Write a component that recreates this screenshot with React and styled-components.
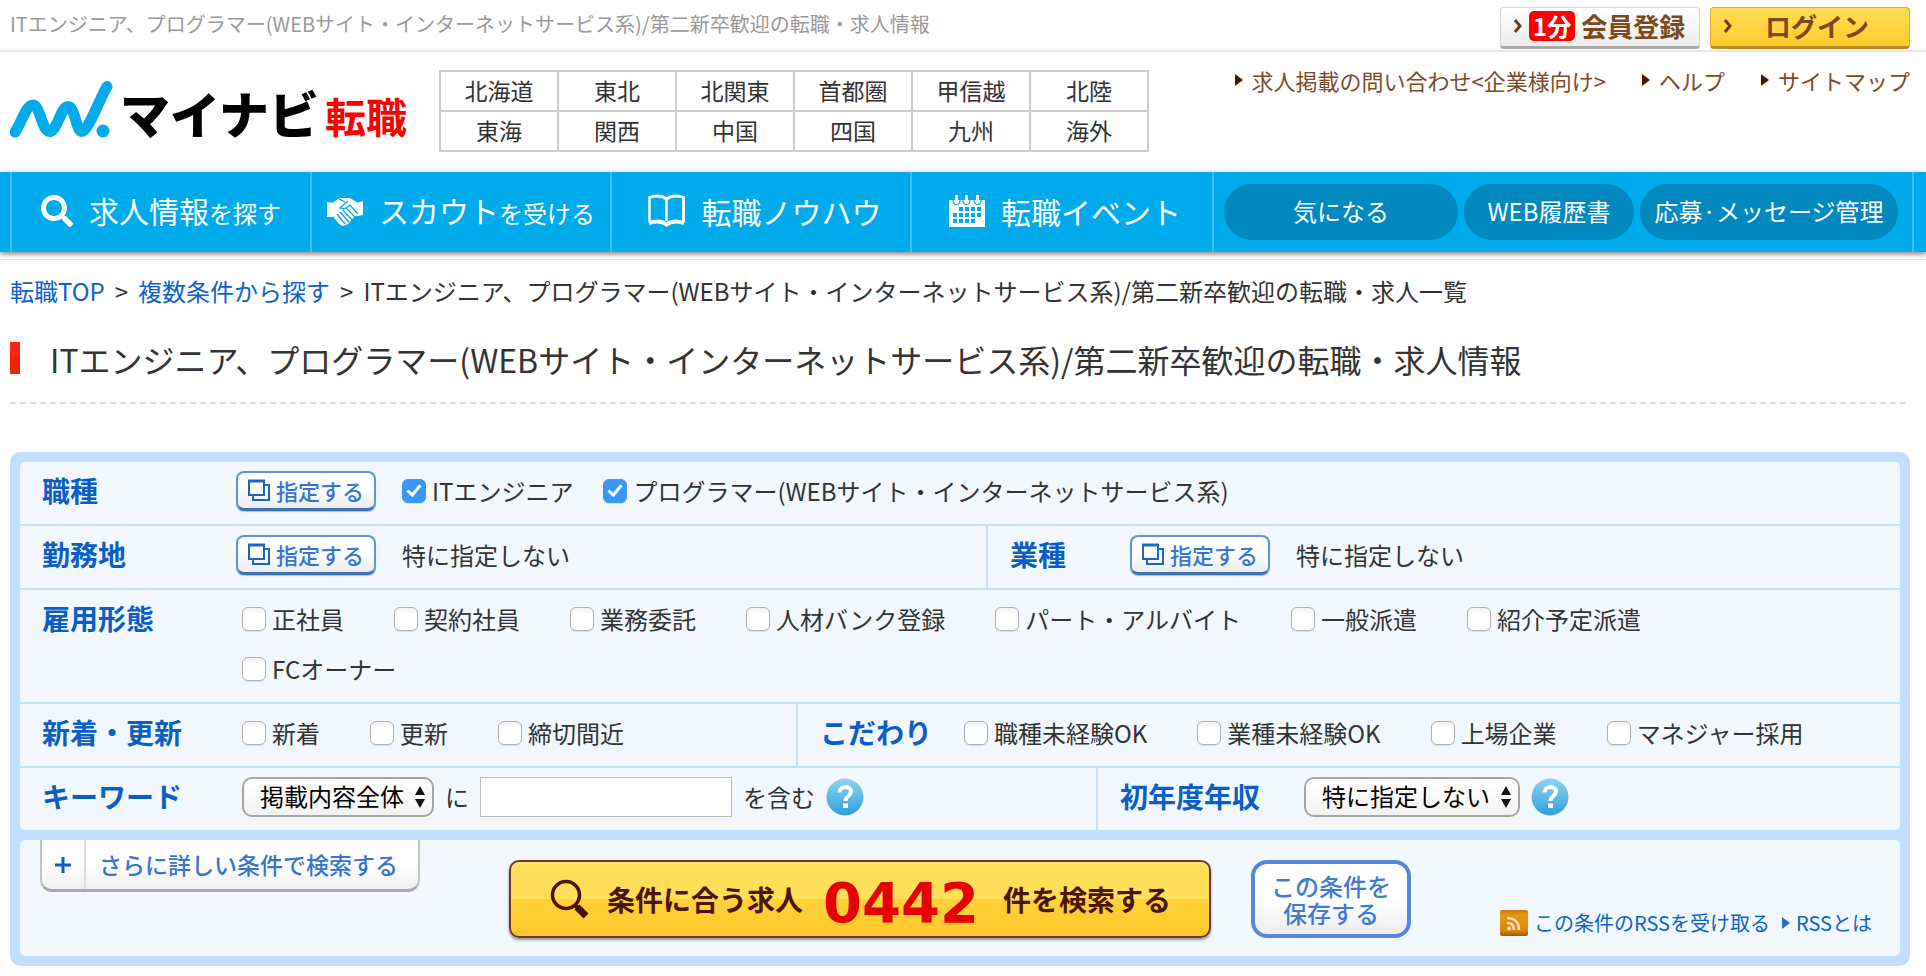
import React from "react";
import styled, { createGlobalStyle, css } from "styled-components";
import { FaSearch } from "react-icons/fa";

const GlobalStyle = createGlobalStyle`
  *, *::before, *::after { box-sizing: border-box; }
  body {
    margin: 0;
    background: #fff;
    color: #333;
    font-family: "Noto Sans CJK JP", "Noto Sans", sans-serif;
    font-size: 24px;
    line-height: 36px;
  }
  a { color: inherit; text-decoration: none; }
  button, input, select { font: inherit; margin: 0; }
  h1, p, ul, ol { margin: 0; padding: 0; font-weight: 400; }
  ul, ol { list-style: none; }
  svg { display: block; flex: none; }
`;

/* ---------- top strip ---------- */

const TopBar = styled.div`
  display: flex;
  align-items: center;
  justify-content: space-between;
  height: 52px;
  padding: 0 16px 0 10px;
  border-bottom: 2px solid #e8e8e8;
`;

const TopText = styled.p`
  padding-bottom: 2px;
  color: #999;
  font-size: 20px;
  line-height: 46px;
`;

const TopButtons = styled.div`
  display: flex;
  gap: 10px;
  padding-top: 6px;
`;

const TopButton = styled.button`
  display: flex;
  align-items: center;
  gap: ${(p) => (p.$login ? 32 : 6)}px;
  width: 200px;
  height: 42px;
  padding: 0 12px 2px;
  border: 1px solid ${(p) => (p.$login ? "#d9ae2a" : "#d5d5d5")};
  border-bottom: 3px solid ${(p) => (p.$login ? "#bb8f22" : "#aaa")};
  border-radius: 4px;
  background: ${(p) =>
    p.$login
      ? "linear-gradient(#ffdd55, #ffcb2b)"
      : "linear-gradient(#fff, #ececec)"};
  color: #7a4a1e;
  font-size: 26px;
  line-height: 36px;
  font-weight: 700;
  white-space: nowrap;
`;

const Badge = styled.span`
  padding: 0 4px;
  border-radius: 5px;
  background: #f00;
  color: #fff;
  font-size: 24px;
  line-height: 30px;
`;

const Chevron = () => (
  <svg width="10" height="16" viewBox="0 0 10 16" fill="none" stroke="#6b3d1e" strokeWidth="3">
    <path d="M2 2l5 6-5 6" />
  </svg>
);

/* ---------- header ---------- */

const Header = styled.header`
  display: flex;
  align-items: flex-start;
  gap: 32px;
  padding: 18px 16px 20px 10px;
`;

const LogoLink = styled.a`
  display: flex;
  align-items: flex-end;
  gap: 6px;
  height: 82px;
  padding: 11px 0 14px;
  white-space: nowrap;
`;

const LogoName = styled.span`
  color: #000;
  font-size: 50px;
  line-height: 52px;
  font-weight: 900;
`;

const LogoSub = styled.span`
  color: #f00;
  font-size: 41px;
  line-height: 46px;
  font-weight: 700;
`;

const Regions = styled.ul`
  display: grid;
  grid-template-columns: repeat(6, 116px);
  gap: 2px;
  padding: 2px;
  background: #ccc;
`;

const Region = styled.li`
  padding-bottom: 2px;
  background: #fff;
  font-size: 23px;
  line-height: 36px;
  text-align: center;
`;

const RegionLink = styled.a`
  display: block;
`;

const HelpLinks = styled.ul`
  display: flex;
  gap: 36px;
  margin-left: auto;
`;

const HelpLink = styled.a`
  display: flex;
  align-items: center;
  gap: 9px;
  color: #7a4a2a;
  font-size: 22px;
  line-height: 20px;
  white-space: nowrap;
`;

const Triangle = styled.span`
  border-style: solid;
  border-width: 6px 0 6px 8px;
  border-color: transparent transparent transparent ${(p) => p.$color};
`;

/* ---------- navigation ---------- */

const Nav = styled.nav`
  display: grid;
  grid-template-columns: 300fr 300fr 300fr 302fr 702fr;
  height: 80px;
  padding: 0 12px 0 10px;
  background: #00abeb;
  box-shadow: 0 2px 5px rgba(0, 0, 0, 0.5);
`;

const NavItem = styled.a`
  display: flex;
  align-items: center;
  justify-content: center;
  gap: 16px;
  padding: 0 0 2px ${(p) => (p.$plain ? 6 : 0)}px;
  border-left: 2px solid #40c0f1;
  color: #fff;
  font-size: 30px;
  white-space: nowrap;
`;

const NavSmall = styled.span`
  font-size: 24px;
`;

const Pills = styled.div`
  display: flex;
  align-items: center;
  gap: 6px;
  padding: 0 14px 0 10px;
  border: solid #40c0f1;
  border-width: 0 2px;
`;

const Pill = styled.a`
  flex: ${(p) => p.$grow} 1 0;
  padding-bottom: 2px;
  border-radius: 28px;
  background: #0088bf;
  color: #fff;
  line-height: 54px;
  text-align: center;
  white-space: nowrap;
`;

/* ---------- title area ---------- */

const Main = styled.main`
  margin-top: 7px;
  padding: 0 16px 10px 10px;
  border-top: 1px solid #cfe6f5;
`;

const Breadcrumb = styled.ol`
  display: flex;
  gap: 10px;
  padding-top: 13px;
  white-space: nowrap;
`;

const Link = styled.a`
  color: #0b62cc;
`;

const Title = styled.h1`
  display: flex;
  align-items: flex-start;
  gap: 30px;
  height: 95px;
  margin-bottom: 48px;
  padding-top: 33px;
  background: repeating-linear-gradient(90deg, #ddd 0 6px, transparent 6px 10px)
    bottom / 100% 2px no-repeat;
  font-size: 32px;
  line-height: 34px;
  white-space: nowrap;

  &::before {
    content: "";
    width: 10px;
    height: 32px;
    background: linear-gradient(#ff2018 35%, #ee2200 50%);
  }
`;

/* ---------- search form ---------- */

const Panel = styled.form`
  display: flex;
  flex-direction: column;
  gap: 10px;
  padding: 10px;
  border-radius: 10px;
  background: #c2dfff;
`;

const Card = styled.div`
  border-radius: 5px;
  background: #f3f8ff;
`;

const Row = styled.div`
  display: grid;
  grid-template-columns: ${(p) => p.$cols || "1fr"};
  min-height: 62px;

  & + & {
    min-height: 64px;
    border-top: 2px solid #c2dfff;
  }
`;

const Cell = styled.div`
  display: flex;
  align-items: flex-start;
  padding: 8px 22px 12px;
  padding-right: ${(p) => (p.$inset ? 100 : 22)}px;

  & + & {
    border-left: 2px solid #c2dfff;
  }
`;

const CellLabel = styled.div`
  flex: none;
  width: ${(p) => p.$width}px;
  color: #0b5dc7;
  font-size: 28px;
  line-height: 40px;
  font-weight: 700;
`;

const Controls = styled.div`
  display: flex;
  align-items: center;
  gap: ${(p) => p.$gap}px;
  height: 42px;
`;

const Checks = styled.div`
  display: flex;
  flex-wrap: wrap;
  gap: 14px ${(p) => p.$gap || 50}px;
  margin: 3px 0;
`;

const CheckLabel = styled.label`
  display: flex;
  align-items: center;
  gap: 6px;
  white-space: nowrap;
`;

const Checkbox = styled.input.attrs({ type: "checkbox" })`
  appearance: none;
  display: grid;
  place-items: center;
  width: 24px;
  height: 24px;
  border: 1px solid #b0b0b0;
  border-radius: 6px;
  background: linear-gradient(#f2f2f2, #fff 30%);
  box-shadow: 0 1px 1px rgba(0, 0, 0, 0.1);

  &:checked {
    border-color: #3797fc;
    background: #3797fc;
  }

  &:checked::after {
    content: "";
    width: 8px;
    height: 14px;
    margin-bottom: 4px;
    border: solid #fff;
    border-width: 0 3px 3px 0;
    transform: rotate(40deg);
  }
`;

const PickButton = styled.button`
  display: flex;
  align-items: center;
  gap: 6px;
  width: 140px;
  height: 40px;
  padding: 0 10px 2px;
  border: 2px solid #5f93dc;
  border-bottom: 3px solid #3d73b3;
  border-radius: 8px;
  background: linear-gradient(#fff 40%, #ececee);
  box-shadow: 0 1px 1px rgba(0, 0, 0, 0.25);
  color: #3377d0;
  font-size: 22px;
  line-height: 32px;
  font-weight: 500;
  white-space: nowrap;
`;

const Plain = styled.span`
  white-space: nowrap;
`;

const SelectBox = styled.span`
  display: grid;
  align-items: center;

  & > * {
    grid-area: 1 / 1;
  }

  & > svg {
    justify-self: end;
    margin-right: 8px;
    pointer-events: none;
  }
`;

const Select = styled.select`
  appearance: none;
  width: ${(p) => p.$width}px;
  height: 40px;
  padding: 0 16px 2px;
  border: 2px solid #a5a5a5;
  border-radius: 10px;
  background: linear-gradient(#fff, #f3f3f3);
  color: #000;
  line-height: 34px;
`;

const TextInput = styled.input.attrs({ type: "text" })`
  width: 252px;
  height: 40px;
  padding: 0 8px;
  border: 1px solid #bbb;
  border-radius: 0;
  background: #fff;
`;

const IconButton = styled.button`
  padding: 0;
  border: 0;
  background: none;
`;

/* ---------- actions ---------- */

const Actions = styled(Card)`
  display: flex;
  align-items: flex-start;
  justify-content: space-between;
  height: 116px;
  padding: 0 28px 0 20px;
`;

const raised = css`
  border: 2px solid #c4c4c4;
  border-top: 0;
  border-bottom: 3px solid #aaa;
  border-radius: 0 0 12px 12px;
`;

const MoreButton = styled.button`
  display: flex;
  align-items: center;
  width: 380px;
  height: 52px;
  padding: 0;
  ${raised}
  background: linear-gradient(#fff 50%, #f0f0f0);
  color: #3874cd;
  font-size: 23px;
  font-weight: 500;
  line-height: 49px;
  white-space: nowrap;
`;

const PlusCell = styled.span`
  display: grid;
  place-items: center;
  width: 44px;
  height: 49px;
  margin-right: 13px;
  border-right: 2px solid #ddd;
`;

const MainActions = styled.div`
  display: flex;
  gap: 40px;
  padding-top: 20px;
`;

const SearchButton = styled.button`
  display: flex;
  align-items: center;
  width: 702px;
  height: 78px;
  padding: 0 38px;
  border: 2px solid #6b3a2a;
  border-radius: 10px;
  background: linear-gradient(#ffdf58 50%, #ffd23a 50%, #ffc82a);
  box-shadow: 0 2px 3px rgba(0, 0, 0, 0.4), inset 0 2px 2px #ffe98a;
  color: #4a1505;
  font-size: 28px;
  font-weight: 700;
  white-space: nowrap;
`;

const SearchText = styled.span`
  margin-left: 18px;
`;

const Count = styled.span`
  margin: 8px 6px 0 20px;
  color: #e60000;
  font-family: "DejaVu Sans", sans-serif;
  font-size: 56px;
  line-height: 64px;
`;

const SaveButton = styled.button`
  width: 160px;
  height: 78px;
  padding: 0;
  border: 4px solid #5588dc;
  border-radius: 16px;
  background: linear-gradient(#fff 50%, #ececec);
  color: #3f7bd3;
  font-size: 24px;
  font-weight: 500;
  line-height: 27px;
`;

const RssLinks = styled.div`
  display: flex;
  align-items: center;
  gap: 12px;
  padding-top: 68px;
  font-size: 20px;
  line-height: 30px;
`;

const RssLink = styled(Link)`
  display: flex;
  align-items: center;
  gap: 6px;
  white-space: nowrap;
`;

/* ---------- icons ---------- */

const LogoMark = () => (
  <svg width="104" height="58" viewBox="0 0 104 58">
    <path
      d="M5 52C12 42 16 25 23 25S32 51.500 39.500 51.500S51 26.500 58 26.500S66 51.500 72 51.500C78 51.500 89 20 97 6.500"
      fill="none"
      stroke="#00abeb"
      strokeWidth="11"
      strokeLinecap="round"
    />
    <circle cx="93" cy="51" r="6.500" fill="#00abeb" />
  </svg>
);

const HandshakeIcon = () => (
  <svg width="36" height="30" viewBox="0 0 36 30">
    <path d="M0 6l6 1v14H0zM36 5l-6 2v13l6-1z" fill="#fff" />
    <path d="M5 7l8-5h10l8 5v12l-4 2-6 7-5 2-4-2-7-9z" fill="#fff" />
    <path
      d="M12 3l6 3M21 5l-8 7 4 1 6-4 8 9M16 14l9 10M13 16l9 10M10 18l8 10M19 12l9 9"
      fill="none"
      stroke="#00abeb"
      strokeWidth="1.300"
    />
  </svg>
);

const BookIcon = () => (
  <svg width="39" height="34" viewBox="0 0 39 34" fill="none" stroke="#fff">
    <path d="M2.500 3.500C8 1 15 1.500 19.500 5 24 1.500 31 1 36.500 3.500V28" strokeWidth="3" />
    <path d="M2.500 2.500V28M19.500 5v22" strokeWidth="2.500" />
    <path d="M2 29c6-2 13-2 17.500 1.500C24 27 31 27 37 29" strokeWidth="4" />
  </svg>
);

const CalendarIcon = () => (
  <svg width="36" height="32" viewBox="0 0 36 32">
    <path d="M0 5h36v27H0z" fill="#fff" />
    <path d="M6 0h3v6H6zM16 0h3v6h-3zM27 0h3v6h-3z" fill="#fff" />
    <path d="M4 5c0 6 7 6 7 0M14 5c0 6 7 6 7 0M25 5c0 6 7 6 7 0" fill="none" stroke="#00abeb" strokeWidth="1.200" />
    <path
      d="M10 12h4v4h-4zM16 12h4v4h-4zM22 12h4v4h-4zM28 12h4v4h-4zM4 18h4v4H4zM10 18h4v4h-4zM16 18h4v4h-4zM22 18h4v4h-4zM28 18h4v4h-4zM4 24h4v4H4zM10 24h4v4h-4zM16 24h4v4h-4zM22 24h4v4h-4z"
      fill="#00abeb"
    />
  </svg>
);

const WindowsIcon = () => (
  <svg width="22" height="22" viewBox="0 0 22 22" fill="none" stroke="#1f66c4" strokeWidth="2">
    <path d="M1 2h15v14H1z" />
    <path d="M0 2h17" strokeWidth="3" />
    <path d="M5 17v4h16V6h-4" />
  </svg>
);

const UpDownIcon = () => (
  <svg width="12" height="24" viewBox="0 0 12 24">
    <path d="M6 1l5 9H1zM6 23l5-9H1z" fill="#111" />
  </svg>
);

const HelpIcon = () => (
  <svg width="38" height="38" viewBox="0 0 38 38">
    <defs>
      <linearGradient id="help" x1="0" y1="0" x2="0" y2="1">
        <stop offset="0" stopColor="#8fd3ef" />
        <stop offset="1" stopColor="#2f9fdc" />
      </linearGradient>
    </defs>
    <circle cx="19" cy="19" r="18.500" fill="url(#help)" />
    <path d="M13.500 14.500c0-7 11.500-7 11.500-1 0 4.500-5.500 4.500-5.500 9.500" fill="none" stroke="#fff" strokeWidth="4" />
    <path d="M17 25.500h5v4.500h-5z" fill="#fff" />
  </svg>
);

const PlusIcon = () => (
  <svg width="16" height="16" viewBox="0 0 16 16" stroke="#0b5dc7" strokeWidth="3">
    <path d="M0 8h16M8 0v16" />
  </svg>
);

const GlassIcon = () => (
  <svg width="40" height="40" viewBox="0 0 40 40" fill="none" stroke="#4a1505">
    <circle cx="17" cy="16" r="13.500" strokeWidth="3.500" />
    <path d="M26 26l4 4" strokeWidth="4" />
    <path d="M28 28l9 9" strokeWidth="7" />
  </svg>
);

const RssIcon = () => (
  <svg width="28" height="26" viewBox="0 0 28 26">
    <defs>
      <linearGradient id="rss" x1="0" y1="0" x2="0" y2="1">
        <stop offset="0" stopColor="#c97a12" />
        <stop offset="0.2" stopColor="#e8960f" />
        <stop offset="0.8" stopColor="#dd850c" />
        <stop offset="1" stopColor="#a85400" />
      </linearGradient>
    </defs>
    <rect width="28" height="26" rx="2" fill="url(#rss)" />
    <g fill="none" stroke="#fbe3bd" strokeWidth="2.500">
      <path d="M7 13c5 0 7 3 7 7M7 8c8 0 12 5 12 12" />
    </g>
    <circle cx="9" cy="18.500" r="2" fill="#fbe3bd" />
  </svg>
);

/* ---------- data ---------- */

const REGIONS = [
  "北海道", "東北", "北関東", "首都圏", "甲信越", "北陸",
  "東海", "関西", "中国", "四国", "九州", "海外",
];

const NAV_ITEMS = [
  { icon: <FaSearch size={32} />, text: "求人情報", small: "を探す" },
  { icon: <HandshakeIcon />, text: "スカウト", small: "を受ける" },
  { icon: <BookIcon />, text: "転職ノウハウ" },
  { icon: <CalendarIcon />, text: "転職イベント" },
];

const PILLS = [
  { text: "気になる", grow: 234 },
  { text: "WEB履歴書", grow: 170 },
  { text: "応募·メッセージ管理", grow: 258 },
];

const CheckList = ({ items, gap, checked }) => (
  <Checks $gap={gap}>
    {items.map((item) => (
      <CheckLabel key={item}>
        <Checkbox defaultChecked={checked} />
        {item}
      </CheckLabel>
    ))}
  </Checks>
);

const Pick = () => (
  <PickButton type="button">
    <WindowsIcon />
    指定する
  </PickButton>
);

const Dropdown = ({ id, label, width, ariaLabel }) => (
  <SelectBox>
    <Select id={id} $width={width} aria-label={ariaLabel}>
      <option>{label}</option>
    </Select>
    <UpDownIcon />
  </SelectBox>
);

const Help = () => (
  <IconButton type="button" aria-label="ヘルプ">
    <HelpIcon />
  </IconButton>
);

export default function App() {
  return (
    <>
      <GlobalStyle />
      <TopBar>
        <TopText>
          ITエンジニア、プログラマー(WEBサイト・インターネットサービス系)/第二新卒歓迎の転職・求人情報
        </TopText>
        <TopButtons>
          <TopButton type="button">
            <Chevron />
            <Badge>1分</Badge>
            会員登録
          </TopButton>
          <TopButton type="button" $login>
            <Chevron />
            ログイン
          </TopButton>
        </TopButtons>
      </TopBar>

      <Header>
        <LogoLink href="#">
          <LogoMark />
          <LogoName>マイナビ</LogoName>
          <LogoSub>転職</LogoSub>
        </LogoLink>
        <Regions>
          {REGIONS.map((name) => (
            <Region key={name}>
              <RegionLink href="#">{name}</RegionLink>
            </Region>
          ))}
        </Regions>
        <HelpLinks>
          {["求人掲載の問い合わせ<企業様向け>", "ヘルプ", "サイトマップ"].map((text) => (
            <li key={text}>
              <HelpLink href="#">
                <Triangle $color="#4a1505" />
                {text}
              </HelpLink>
            </li>
          ))}
        </HelpLinks>
      </Header>

      <Nav>
        {NAV_ITEMS.map((item) => (
          <NavItem key={item.text} href="#" $plain={!item.small}>
            {item.icon}
            <span>
              {item.text}
              {item.small && <NavSmall>{item.small}</NavSmall>}
            </span>
          </NavItem>
        ))}
        <Pills>
          {PILLS.map((pill) => (
            <Pill key={pill.text} href="#" $grow={pill.grow}>
              {pill.text}
            </Pill>
          ))}
        </Pills>
      </Nav>

      <Main>
        <Breadcrumb>
          <li><Link href="#">転職TOP</Link></li>
          <li>&gt;</li>
          <li><Link href="#">複数条件から探す</Link></li>
          <li>&gt;</li>
          <li>
            ITエンジニア、プログラマー(WEBサイト・インターネットサービス系)/第二新卒歓迎の転職・求人一覧
          </li>
        </Breadcrumb>
        <Title>
          ITエンジニア、プログラマー(WEBサイト・インターネットサービス系)/第二新卒歓迎の転職・求人情報
        </Title>

        <Panel onSubmit={(e) => e.preventDefault()}>
          <Card>
            <Row>
              <Cell>
                <CellLabel $width={194}>職種</CellLabel>
                <Controls $gap={26}>
                  <Pick />
                  <CheckList
                    gap={30}
                    checked
                    items={[
                      "ITエンジニア",
                      "プログラマー(WEBサイト・インターネットサービス系)",
                    ]}
                  />
                </Controls>
              </Cell>
            </Row>
            <Row $cols="966fr 914fr">
              <Cell>
                <CellLabel $width={194}>勤務地</CellLabel>
                <Controls $gap={26}>
                  <Pick />
                  <Plain>特に指定しない</Plain>
                </Controls>
              </Cell>
              <Cell>
                <CellLabel $width={120}>業種</CellLabel>
                <Controls $gap={26}>
                  <Pick />
                  <Plain>特に指定しない</Plain>
                </Controls>
              </Cell>
            </Row>
            <Row>
              <Cell $inset>
                <CellLabel $width={200}>雇用形態</CellLabel>
                <CheckList
                  items={[
                    "正社員", "契約社員", "業務委託", "人材バンク登録",
                    "パート・アルバイト", "一般派遣", "紹介予定派遣", "FCオーナー",
                  ]}
                />
              </Cell>
            </Row>
            <Row $cols="776fr 1104fr">
              <Cell>
                <CellLabel $width={200}>新着・更新</CellLabel>
                <CheckList items={["新着", "更新", "締切間近"]} />
              </Cell>
              <Cell>
                <CellLabel $width={144}>こだわり</CellLabel>
                <CheckList
                  items={["職種未経験OK", "業種未経験OK", "上場企業", "マネジャー採用"]}
                />
              </Cell>
            </Row>
            <Row $cols="1076fr 804fr">
              <Cell>
                <CellLabel as="label" htmlFor="keyword" $width={200}>キーワード</CellLabel>
                <Controls $gap={11}>
                  <Dropdown id="scope" label="掲載内容全体" width={192} ariaLabel="検索対象" />
                  <Plain>に</Plain>
                  <TextInput id="keyword" />
                  <Plain>を含む</Plain>
                  <Help />
                </Controls>
              </Cell>
              <Cell>
                <CellLabel as="label" htmlFor="income" $width={184}>初年度年収</CellLabel>
                <Controls $gap={11}>
                  <Dropdown id="income" label="特に指定しない" width={216} />
                  <Help />
                </Controls>
              </Cell>
            </Row>
          </Card>

          <Actions>
            <MoreButton type="button">
              <PlusCell><PlusIcon /></PlusCell>
              さらに詳しい条件で検索する
            </MoreButton>
            <MainActions>
              <SearchButton type="submit">
                <GlassIcon />
                <SearchText>条件に合う求人</SearchText>
                <Count>0442</Count>
                <SearchText>件を検索する</SearchText>
              </SearchButton>
              <SaveButton type="button">
                この条件を
                <br />
                保存する
              </SaveButton>
            </MainActions>
            <RssLinks>
              <RssLink href="#">
                <RssIcon />
                この条件のRSSを受け取る
              </RssLink>
              <RssLink href="#">
                <Triangle $color="#2a6fd0" />
                RSSとは
              </RssLink>
            </RssLinks>
          </Actions>
        </Panel>
      </Main>
    </>
  );
}
